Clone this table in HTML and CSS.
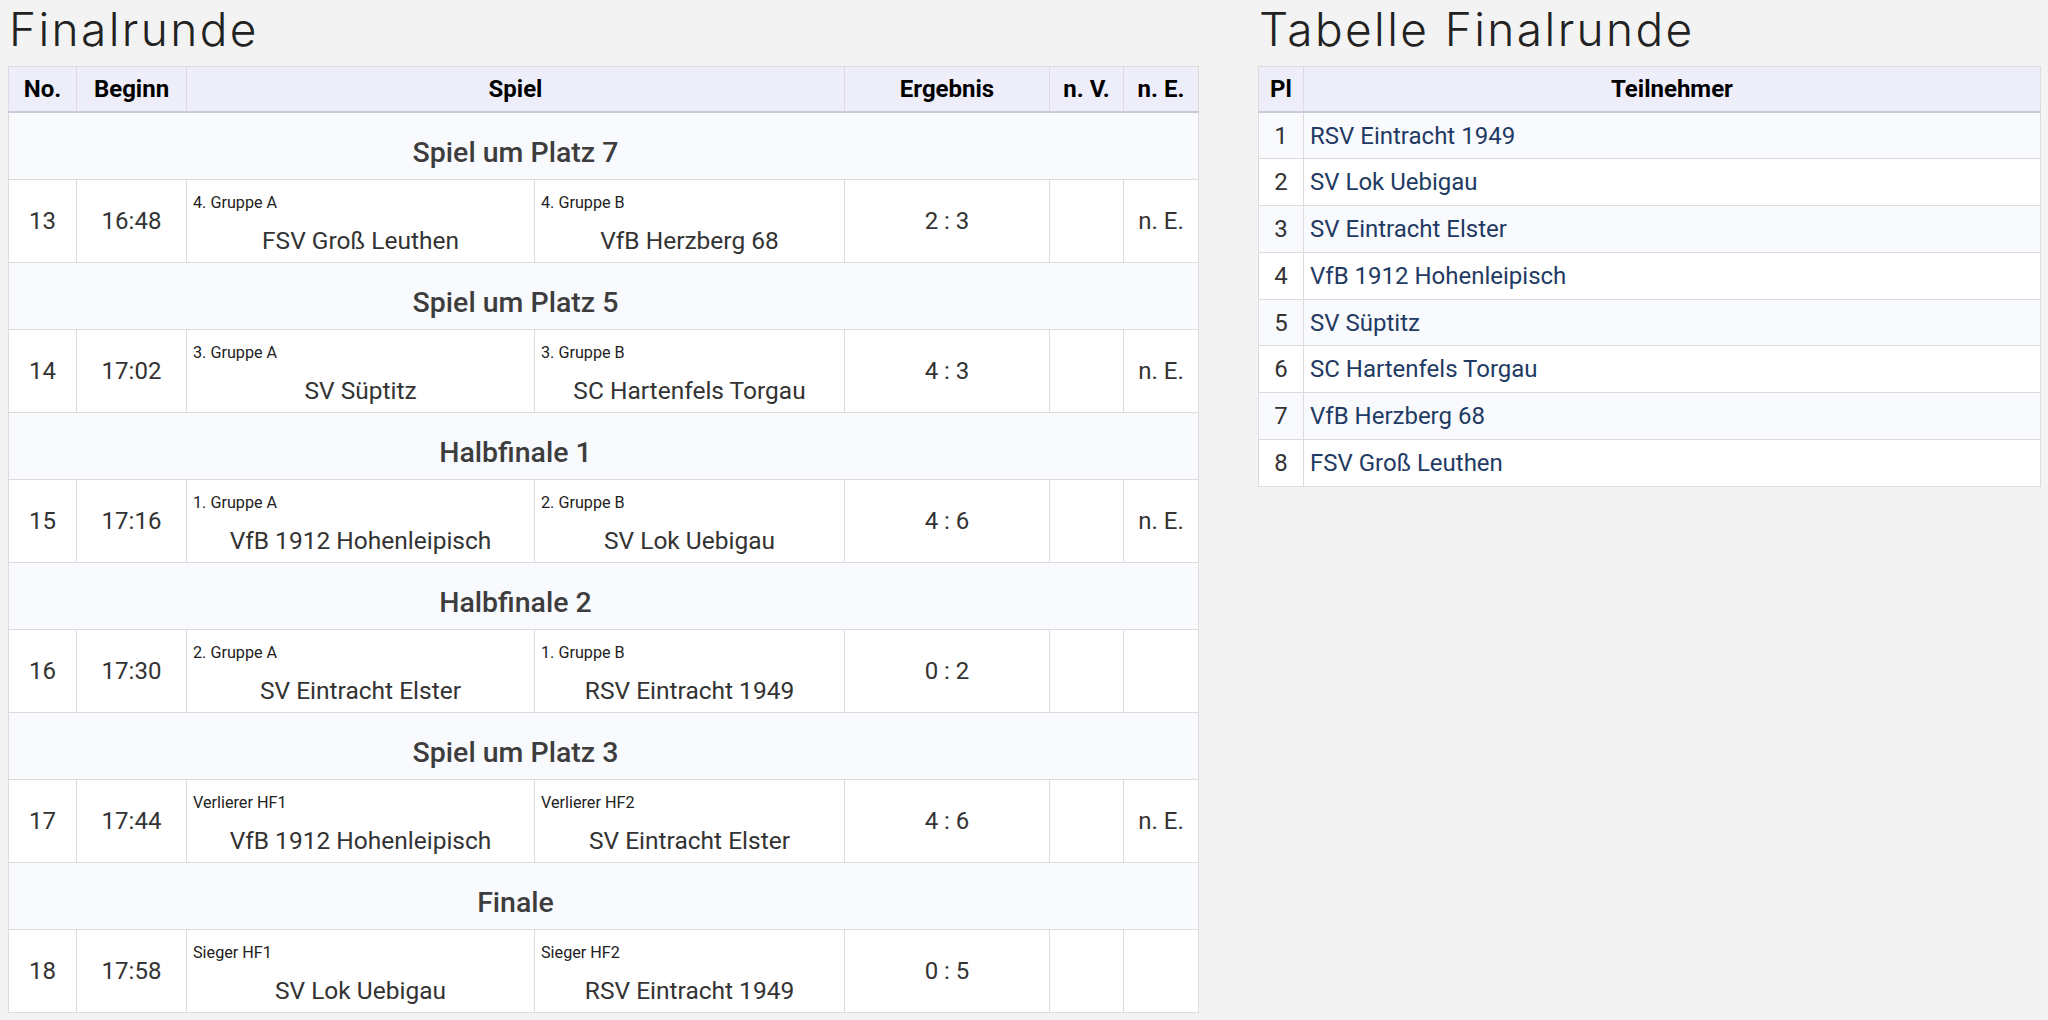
FILE: index.html
```html
<!DOCTYPE html>
<html lang="de">
<head>
<meta charset="utf-8">
<title>Finalrunde</title>
<link rel="stylesheet" href="styles.css">
</head>
<body>
<div class="page">
  <section class="left">
    <h1 class="title">Finalrunde</h1>
    <table class="games">
      <colgroup>
        <col class="c-no"><col class="c-time"><col class="c-t1"><col class="c-t2"><col class="c-res"><col class="c-nv"><col class="c-ne">
      </colgroup>
      <thead>
        <tr><th>No.</th><th>Beginn</th><th colspan="2">Spiel</th><th>Ergebnis</th><th>n. V.</th><th>n. E.</th></tr>
      </thead>
      <tbody>
        <tr class="sec"><td colspan="2"></td><td colspan="2">Spiel um Platz 7</td><td colspan="3"></td></tr>
        <tr class="match"><td>13</td><td>16:48</td><td class="team"><div class="lbl">4. Gruppe A</div><div class="name">FSV Groß Leuthen</div></td><td class="team"><div class="lbl">4. Gruppe B</div><div class="name">VfB Herzberg 68</div></td><td>2 : 3</td><td></td><td>n. E.</td></tr>

        <tr class="sec"><td colspan="2"></td><td colspan="2">Spiel um Platz 5</td><td colspan="3"></td></tr>
        <tr class="match"><td>14</td><td>17:02</td><td class="team"><div class="lbl">3. Gruppe A</div><div class="name">SV Süptitz</div></td><td class="team"><div class="lbl">3. Gruppe B</div><div class="name">SC Hartenfels Torgau</div></td><td>4 : 3</td><td></td><td>n. E.</td></tr>

        <tr class="sec"><td colspan="2"></td><td colspan="2">Halbfinale 1</td><td colspan="3"></td></tr>
        <tr class="match"><td>15</td><td>17:16</td><td class="team"><div class="lbl">1. Gruppe A</div><div class="name">VfB 1912 Hohenleipisch</div></td><td class="team"><div class="lbl">2. Gruppe B</div><div class="name">SV Lok Uebigau</div></td><td>4 : 6</td><td></td><td>n. E.</td></tr>

        <tr class="sec"><td colspan="2"></td><td colspan="2">Halbfinale 2</td><td colspan="3"></td></tr>
        <tr class="match"><td>16</td><td>17:30</td><td class="team"><div class="lbl">2. Gruppe A</div><div class="name">SV Eintracht Elster</div></td><td class="team"><div class="lbl">1. Gruppe B</div><div class="name">RSV Eintracht 1949</div></td><td>0 : 2</td><td></td><td></td></tr>

        <tr class="sec"><td colspan="2"></td><td colspan="2">Spiel um Platz 3</td><td colspan="3"></td></tr>
        <tr class="match"><td>17</td><td>17:44</td><td class="team"><div class="lbl">Verlierer HF1</div><div class="name">VfB 1912 Hohenleipisch</div></td><td class="team"><div class="lbl">Verlierer HF2</div><div class="name">SV Eintracht Elster</div></td><td>4 : 6</td><td></td><td>n. E.</td></tr>

        <tr class="sec"><td colspan="2"></td><td colspan="2">Finale</td><td colspan="3"></td></tr>
        <tr class="match"><td>18</td><td>17:58</td><td class="team"><div class="lbl">Sieger HF1</div><div class="name">SV Lok Uebigau</div></td><td class="team"><div class="lbl">Sieger HF2</div><div class="name">RSV Eintracht 1949</div></td><td>0 : 5</td><td></td><td></td></tr>
      </tbody>
    </table>
  </section>
  <section class="right">
    <h1 class="title">Tabelle Finalrunde</h1>
    <table class="standings">
      <colgroup><col class="c-pl"><col></colgroup>
      <thead><tr><th>Pl</th><th>Teilnehmer</th></tr></thead>
      <tbody>
        <tr><td>1</td><td class="tn">RSV Eintracht 1949</td></tr>
        <tr><td>2</td><td class="tn">SV Lok Uebigau</td></tr>
        <tr><td>3</td><td class="tn">SV Eintracht Elster</td></tr>
        <tr><td>4</td><td class="tn">VfB 1912 Hohenleipisch</td></tr>
        <tr><td>5</td><td class="tn">SV Süptitz</td></tr>
        <tr><td>6</td><td class="tn">SC Hartenfels Torgau</td></tr>
        <tr><td>7</td><td class="tn">VfB Herzberg 68</td></tr>
        <tr><td>8</td><td class="tn">FSV Groß Leuthen</td></tr>
      </tbody>
    </table>
  </section>
</div>
</body>
</html>
```

FILE: styles.css
```css
html, body {
  margin: 0;
  padding: 0;
  background: #f3f3f3;
  font-family: Roboto, "Liberation Sans", sans-serif;
  color: #333;
}

.page {
  display: grid;
  grid-template-columns: 1190px 783px;
  column-gap: 60px;
  padding: 1px 0 0 8px;
  align-items: start;
}

.title {
  margin: 0 0 9px 1px;
  font-family: Inter, "Open Sans", sans-serif;
  font-weight: 300;
  font-size: 46px;
  line-height: 56px;
  color: #222;
  letter-spacing: 2.4px;
}

table {
  border-collapse: collapse;
  table-layout: fixed;
  width: 100%;
  background: #fff;
  border: 1px solid #dcdcdc;
}

th {
  background: #eeeefb;
  color: #000;
  font-weight: 700;
  font-size: 24px;
  height: 44px;
  padding: 0;
  border: 1px solid #dcdcdc;
  border-bottom: 2px solid #c9c9d9;
  text-align: center;
  vertical-align: middle;
}

td {
  border: 1px solid #dcdcdc;
  padding: 0;
  font-size: 24px;
  text-align: center;
  vertical-align: middle;
  color: #333;
}

.c-no { width: 68px; }
.c-time { width: 110px; }
.c-t1 { width: 348px; }
.c-t2 { width: 310px; }
.c-res { width: 205px; }
.c-nv { width: 74px; }
.c-ne { width: 75px; }

.sec {
  height: 67px;
}

.sec td {
  background: #f9fafe;
  border-left: none;
  border-right: none;
  font-size: 28.5px;
  font-weight: 500;
  color: #3d3d3d;
  padding-top: 13px;
}

.match {
  height: 83px;
}

.match td.team {
  vertical-align: top;
  padding: 13px 0 0 0;
}

.lbl {
  text-align: left;
  padding-left: 6px;
  font-size: 16.2px;
  line-height: 20px;
  color: #222;
}

.name {
  margin-top: 14px;
  font-size: 24.5px;
  line-height: 28px;
  color: #333;
}

.c-pl { width: 45px; }

.standings tbody tr {
  height: 46.8px;
}

.standings tbody td {
  font-size: 24px;
}

.standings tbody tr:nth-child(odd) td {
  background: #f9fafe;
}

.standings td.tn {
  text-align: left;
  padding-left: 6px;
  color: #1f3b63;
}
```
